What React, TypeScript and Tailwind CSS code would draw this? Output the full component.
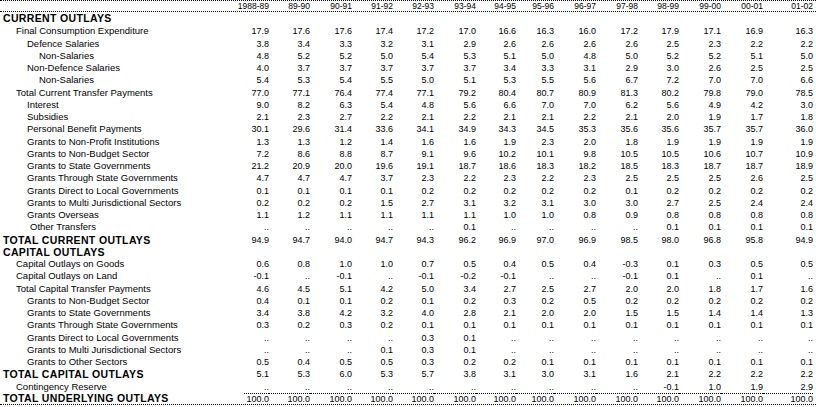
type Row = {
    label:   string,
    indent:  number,
    bold?:   boolean,
    values?: string[],
}

const YEARS = ["1988-89", "89-90", "90-91", "91-92", "92-93", "93-94", "94-95", "95-96", "96-97", "97-98", "98-99", "99-00", "00-01", "01-02"];

const v = (s: string) => s.split(" ");

const ROWS: Row[] = [
    { label: "Final Consumption Expenditure", indent: 1, values: v("17.9 17.6 17.6 17.4 17.2 17.0 16.6 16.3 16.0 17.2 17.9 17.1 16.9 16.3") },
    { label: "Defence Salaries", indent: 2, values: v("3.8 3.4 3.3 3.2 3.1 2.9 2.6 2.6 2.6 2.6 2.5 2.3 2.2 2.2") },
    { label: "Non-Salaries", indent: 3, values: v("4.8 5.2 5.2 5.0 5.4 5.3 5.1 5.0 4.8 5.0 5.2 5.2 5.1 5.0") },
    { label: "Non-Defence Salaries", indent: 2, values: v("4.0 3.7 3.7 3.7 3.7 3.7 3.4 3.3 3.1 2.9 3.0 2.6 2.5 2.5") },
    { label: "Non-Salaries", indent: 3, values: v("5.4 5.3 5.4 5.5 5.0 5.1 5.3 5.5 5.6 6.7 7.2 7.0 7.0 6.6") },
    { label: "Total Current Transfer Payments", indent: 1, values: v("77.0 77.1 76.4 77.4 77.1 79.2 80.4 80.7 80.9 81.3 80.2 79.8 79.0 78.5") },
    { label: "Interest", indent: 2, values: v("9.0 8.2 6.3 5.4 4.8 5.6 6.6 7.0 7.0 6.2 5.6 4.9 4.2 3.0") },
    { label: "Subsidies", indent: 2, values: v("2.1 2.3 2.7 2.2 2.1 2.2 2.1 2.1 2.2 2.1 2.0 1.9 1.7 1.8") },
    { label: "Personal Benefit Payments", indent: 2, values: v("30.1 29.6 31.4 33.6 34.1 34.9 34.3 34.5 35.3 35.6 35.6 35.7 35.7 36.0") },
    { label: "Grants to Non-Profit Institutions", indent: 2, values: v("1.3 1.3 1.2 1.4 1.6 1.6 1.9 2.3 2.0 1.8 1.9 1.9 1.9 1.9") },
    { label: "Grants to Non-Budget Sector", indent: 2, values: v("7.2 8.6 8.8 8.7 9.1 9.6 10.2 10.1 9.8 10.5 10.5 10.6 10.7 10.9") },
    { label: "Grants to State Governments", indent: 2, values: v("21.2 20.9 20.0 19.6 19.1 18.7 18.6 18.3 18.2 18.5 18.3 18.7 18.7 18.9") },
    { label: "Grants Through State Governments", indent: 2, values: v("4.7 4.7 4.7 3.7 2.3 2.2 2.3 2.2 2.3 2.5 2.5 2.5 2.6 2.5") },
    { label: "Grants Direct to Local Governments", indent: 2, values: v("0.1 0.1 0.1 0.1 0.2 0.2 0.2 0.2 0.2 0.1 0.2 0.2 0.2 0.2") },
    { label: "Grants to Multi Jurisdictional Sectors", indent: 2, values: v("0.2 0.2 0.2 1.5 2.7 3.1 3.2 3.1 3.0 3.0 2.7 2.5 2.4 2.4") },
    { label: "Grants Overseas", indent: 2, values: v("1.1 1.2 1.1 1.1 1.1 1.1 1.0 1.0 0.8 0.9 0.8 0.8 0.8 0.8") },
    { label: "Other Transfers", indent: 4, values: v(".. .. .. .. .. 0.1 .. .. .. .. 0.1 0.1 0.1 0.1") },
    { label: "TOTAL CURRENT OUTLAYS", indent: 0, bold: true, values: v("94.9 94.7 94.0 94.7 94.3 96.2 96.9 97.0 96.9 98.5 98.0 96.8 95.8 94.9") },
    { label: "CAPITAL OUTLAYS", indent: 0, bold: true },
    { label: "Capital Outlays on Goods", indent: 1, values: v("0.6 0.8 1.0 1.0 0.7 0.5 0.4 0.5 0.4 -0.3 0.1 0.3 0.5 0.5") },
    { label: "Capital Outlays on Land", indent: 1, values: v("-0.1 .. -0.1 .. -0.1 -0.2 -0.1 .. .. -0.1 0.1 .. 0.1 ..") },
    { label: "Total Capital Transfer Payments", indent: 1, values: v("4.6 4.5 5.1 4.2 5.0 3.4 2.7 2.5 2.7 2.0 2.0 1.8 1.7 1.6") },
    { label: "Grants to Non-Budget Sector", indent: 2, values: v("0.4 0.1 0.1 0.2 0.1 0.2 0.3 0.2 0.5 0.2 0.2 0.2 0.2 0.2") },
    { label: "Grants to State Governments", indent: 2, values: v("3.4 3.8 4.2 3.2 4.0 2.8 2.1 2.0 2.0 1.5 1.5 1.4 1.4 1.3") },
    { label: "Grants Through State Governments", indent: 2, values: v("0.3 0.2 0.3 0.2 0.1 0.1 0.1 0.1 0.1 0.1 0.1 0.1 0.1 0.1") },
    { label: "Grants Direct to Local Governments", indent: 2, values: v(".. .. .. .. 0.3 0.1 .. .. .. .. .. .. .. ..") },
    { label: "Grants to Multi Jurisdictional Sectors", indent: 2, values: v(".. .. .. 0.1 0.3 0.1 .. .. .. .. .. .. .. ..") },
    { label: "Grants to Other Sectors", indent: 2, values: v("0.5 0.4 0.5 0.5 0.3 0.2 0.2 0.1 0.1 0.1 0.1 0.1 0.1 0.1") },
    { label: "TOTAL CAPITAL OUTLAYS", indent: 0, bold: true, values: v("5.1 5.3 6.0 5.3 5.7 3.8 3.1 3.0 3.1 1.6 2.1 2.2 2.2 2.2") },
    { label: "Contingency Reserve", indent: 1, values: v(".. .. .. .. .. .. .. .. .. .. -0.1 1.0 1.9 2.9") },
];

const TOTAL = Array(14).fill("100.0");

// fixed column widths, numbers are right aligned
const GRID = "grid grid-cols-[228px_41px_41px_42px_41px_41px_42px_40px_38px_42px_42px_41px_42px_42px_50px]";

const INDENT = ["pl-[3px]", "pl-[16px]", "pl-[27px]", "pl-[39px]", "pl-[30px]"];

function Label(props: { row: Row }) {
    const { row } = props;
    return (
        <div className={`${INDENT[row.indent]} whitespace-nowrap ${row.bold
            ? "font-bold text-[10.5px] tracking-[0.35px]"
            : "text-[9.5px]"}`}>
            {row.label}
        </div>
    )
}

function DataRow(props: { row: Row }) {
    const { row } = props;
    return (
        <div className={`${GRID} h-[12.25px] leading-[12.25px] items-center`}>
            <Label row={row} />
            {(row.values ?? Array(14).fill("")).map((val, i) => (
                <div key={i} className="text-right text-[9px]">{val}</div>
            ))}
        </div>
    )
}

export default function App() {
    return (
        <div className="w-[816px] h-[407px] bg-white text-black overflow-hidden font-['Liberation_Sans',Arial,sans-serif]">
            <div className={`${GRID} h-[12px] border-t border-b border-dotted border-black leading-[10px] items-end`}>
                <div></div>
                {YEARS.map((y) => (
                    <div key={y} className="text-right text-[8.5px]">{y}</div>
                ))}
            </div>
            <div className="h-[13.4px] leading-[10px] pt-[1px]">
                <Label row={{ label: "CURRENT OUTLAYS", indent: 0, bold: true }} />
            </div>
            {ROWS.map((row, i) => (
                <DataRow key={i} row={row} />
            ))}
            <div className={`${GRID} h-[12.5px] border-b border-dotted border-black leading-[11px] items-center`}>
                <Label row={{ label: "TOTAL UNDERLYING OUTLAYS", indent: 0, bold: true }} />
                {TOTAL.map((val, i) => (
                    <div key={i}
                        className={`text-right text-[9px] border-t border-dotted border-black ${i === 0 ? "ml-[16px]" : ""}`}>
                        {val}
                    </div>
                ))}
            </div>
        </div>
    )
}
